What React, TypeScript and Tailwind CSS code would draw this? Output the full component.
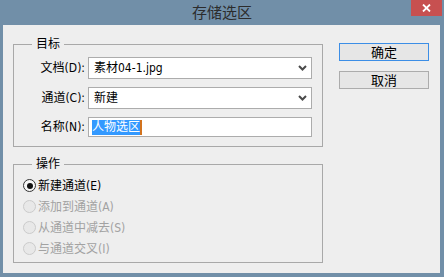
import React from 'react';

const FONT = { fontFamily: '"DejaVu Sans Condensed", "Liberation Sans", "Noto Sans CJK SC", sans-serif' };

// small chevron used by the two dropdowns
const Chevron = () => (
  <svg width="9" height="6" viewBox="0 0 9 6" className="shrink-0">
    <path d="M1 1 L4.5 4.5 L8 1" fill="none" stroke="#4a4a4a" strokeWidth="2" />
  </svg>
);

const Select = ({ value }: { value: string }) => (
  <div className="w-[224px] h-[22px] bg-white border border-[#acacac] flex items-center justify-between pl-[5px] pr-[4px] text-[12px] text-black">
    <span>{value}</span>
    <Chevron />
  </div>
);

const Row = ({ label, children }: { label: string; children: React.ReactNode }) => (
  <div className="flex items-center">
    <span className="w-[74px] text-right pr-[3px] text-[12px] text-black">{label}</span>
    {children}
  </div>
);

const Radio = ({ label, checked = false, disabled = false }: { label: string; checked?: boolean; disabled?: boolean }) => (
  <div className="h-[21px] flex items-center">
    <span
      className={`w-[13px] h-[13px] rounded-full border flex items-center justify-center ${
        disabled ? 'border-[#cbcbcb] bg-[#e8e8e8]' : 'border-[#333] bg-[#f7f7f7]'
      }`}
    >
      {checked && <span className="w-[6px] h-[6px] rounded-full bg-[#111]" />}
    </span>
    <span className={`ml-[2px] text-[12px] ${disabled ? 'text-[#a2a2a2]' : 'text-black'}`}>{label}</span>
  </div>
);

const Group = ({ title, className, children }: { title: string; className: string; children: React.ReactNode }) => (
  <div className={`relative border border-[#a8a8a8] ${className}`}>
    <span className="absolute left-[18px] top-[-9px] px-[4px] bg-[#eeeeee] text-[12px] leading-[17px] text-black">{title}</span>
    {children}
  </div>
);

export default function App() {
  return (
    <div style={FONT} className="w-[444px] h-[277px] bg-[#718fa8] flex flex-col">
      {/* title bar */}
      <div className="relative h-[25px] flex items-center justify-center">
        <span className="text-[15px] text-[#2c2c2c] pt-[2px]">存储选区</span>
        <div className="absolute right-[2px] top-0 w-[31px] h-[16px] bg-[#c75050] flex items-center justify-center">
          <svg width="9" height="8" viewBox="0 0 9 8">
            <path d="M1 0.5 L8 7.5 M8 0.5 L1 7.5" stroke="#fff" strokeWidth="1.8" />
          </svg>
        </div>
      </div>

      {/* client area */}
      <div className="flex-1 ml-[3px] mr-[4px] mb-[4px] bg-[#eeeeee] flex">
        <div className="pl-[10px] pt-[19px] w-[320px] flex flex-col">
          <Group title="目标" className="h-[103px] pt-[12px] flex flex-col gap-[8px]">
            <Row label="文档(D):">
              <Select value="素材04-1.jpg" />
            </Row>
            <Row label="通道(C):">
              <Select value="新建" />
            </Row>
            <Row label="名称(N):">
              <div className="w-[224px] h-[20px] bg-white border border-[#acacac] flex items-center pl-[3px] text-[12px]">
                <span className="bg-[#3399ff] text-white leading-[15px]">人物选区</span>
                <span className="w-[2px] h-[15px] bg-[#d2731e]" />
              </div>
            </Row>
          </Group>

          <Group title="操作" className="mt-[17px] h-[99px] pt-[10px] pl-[9px]">
            <Radio label="新建通道(E)" checked />
            <Radio label="添加到通道(A)" disabled />
            <Radio label="从通道中减去(S)" disabled />
            <Radio label="与通道交叉(I)" disabled />
          </Group>
        </div>

        <div className="pl-[16px] pt-[18px] flex flex-col gap-[10px]">
          <button className="w-[90px] h-[18px] border border-[#3c8ee6] bg-[#e6e6e6] text-[13px] text-black leading-none">确定</button>
          <button className="w-[90px] h-[18px] border border-[#acacac] bg-[#e6e6e6] text-[13px] text-black leading-none">取消</button>
        </div>
      </div>
    </div>
  );
}
